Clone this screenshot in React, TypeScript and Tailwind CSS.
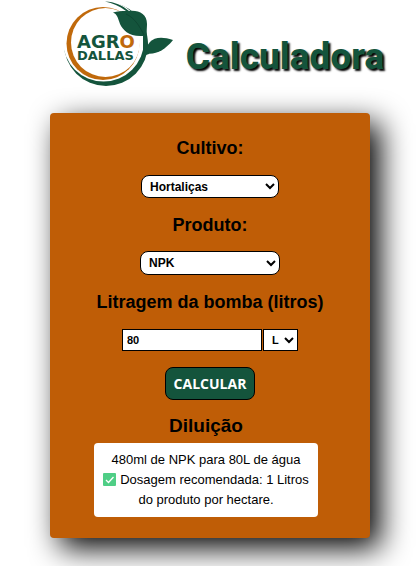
import { useState } from "react";

function Logo() {
  return (
    <svg viewBox="0 0 112 88" className="h-[88px] w-[112px] shrink-0" role="img" aria-label="Agro Dallas">
      <circle cx="44" cy="44" r="42" fill="#14543c" />
      <circle cx="41.500" cy="41" r="40.500" fill="#fff" />
      <circle cx="41" cy="43.500" r="36.500" fill="#c0690b" />
      <circle cx="43.500" cy="42.500" r="34.500" fill="#fff" />
      <path
        d="M43 1.500 C53 2 60 5 67 11 C77 10 85 14 85 24 C85 29 84 32 86 44 L87 54 L81 56 L81 36 C67 37 61 30 58 24 C56 18 55 14 51 12.500 C55 11 60 11 64 11 C57 6 51 3 43 1.500Z"
        fill="#14543c"
      />
      <path d="M64 14 C73 18 78 27 82 35" fill="none" stroke="#0f4632" strokeWidth="1" />
      <path d="M84 53.500 C84 40 94 34 111 40 C103 50 94 55 84 53.500Z" fill="#14543c" />
      <g fontFamily="DejaVu Sans, sans-serif" fontWeight="700">
        <text x="15" y="48" fontSize="18" fill="#14543c">
          AGR<tspan fill="#c0690b">O</tspan>
        </text>
        <text x="15" y="60" fontSize="13" fill="#14543c">DALLAS</text>
      </g>
    </svg>
  );
}

function CheckMark() {
  return (
    <svg viewBox="0 0 13 13" className="mr-1 inline-block size-[13px] align-[-2px]" aria-hidden="true">
      <rect width="13" height="13" rx="1" fill="#4fce86" />
      <path d="M3 7l2.500 2.500L10.500 4" fill="none" stroke="#fff" strokeWidth="1.300" />
    </svg>
  );
}

export default function App() {
  const [volume, setVolume] = useState("80");
  const heading = "text-[18px] leading-[21px] font-bold";

  return (
    <div className="bg-white pb-7 font-['Liberation_Sans',Arial,sans-serif] text-black">
      <header className="flex items-start justify-center gap-3 pl-[26px]">
        <Logo />
        <h1 className="pt-9 font-['Roboto',sans-serif] text-[37px] leading-[42px] font-extrabold text-[#14543c] [text-shadow:2px_2px_2px_#000]">
          Calculadora
        </h1>
      </header>
      <main className="mx-[50px] mt-[25px] flex flex-col items-center rounded bg-[#bf5d06] pt-[25px] pb-[21px] shadow-[10px_10px_30px_#000]">
        <label htmlFor="crop" className={heading}>Cultivo:</label>
        <select id="crop" className="mt-4 h-[23px] w-[138px] rounded-lg border border-black bg-white pl-1 text-[12px] font-bold">
          <option>Hortaliças</option>
        </select>
        <label htmlFor="product" className={`mt-[17px] ${heading}`}>Produto:</label>
        <select id="product" className="mt-[15px] h-6 w-[140px] rounded-lg border border-black bg-white pl-1 text-[12px] font-bold">
          <option>NPK</option>
        </select>
        <label htmlFor="volume" className={`mt-[17px] ${heading}`}>Litragem da bomba (litros)</label>
        <div className="mt-4 flex gap-px">
          <input
            id="volume"
            value={volume}
            onChange={(e) => setVolume(e.target.value)}
            className="h-[22px] w-[140px] border border-black bg-white px-1 text-[11px] font-bold"
          />
          <select aria-label="Unidade" className="h-[22px] w-[35px] border border-black bg-white pl-1 text-[11px] font-bold">
            <option>L</option>
          </select>
        </div>
        <button className="mt-4 h-[33px] w-[90px] rounded-lg border border-black bg-[#14543c] font-['Open_Sans',sans-serif] text-[14px] font-bold text-white">
          CALCULAR
        </button>
        <section className="mt-[15px] flex flex-col items-center pr-2">
          <h2 className="text-[19px] leading-[21px] font-bold">Diluição</h2>
          <div className="mt-[7px] w-[224px] rounded bg-white px-2 py-[7px] text-center text-[13px] leading-5">
            <p>480ml de NPK para 80L de água</p>
            <p><CheckMark />Dosagem recomendada: 1 Litros do produto por hectare.</p>
          </div>
        </section>
      </main>
    </div>
  );
}
